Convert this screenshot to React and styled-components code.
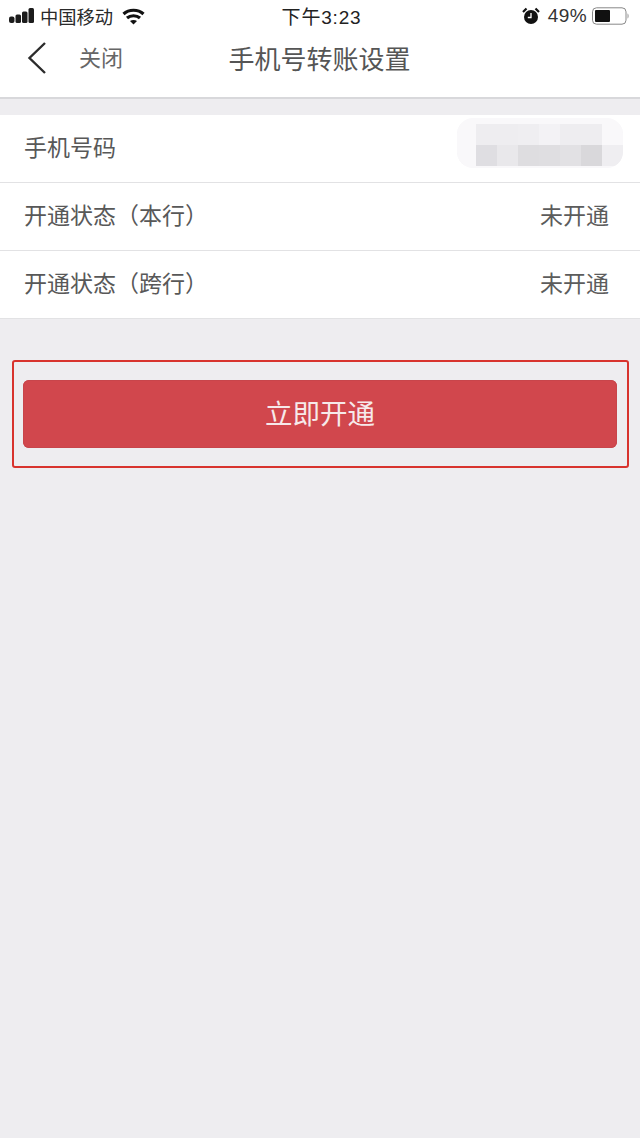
import React from "react";
import styled, { createGlobalStyle } from "styled-components";

const Global = createGlobalStyle`
  html, body { margin: 0; padding: 0; background: #eeedf0; }
  * { box-sizing: border-box; }
  body { font-family: "Liberation Sans", "Noto Sans CJK SC", sans-serif; }
`;
const Page = styled.div`
  width: 640px; height: 1138px; background: #eeedf0; overflow: hidden;
`;
const Header = styled.header`
  background: #fff; height: 99px; border-bottom: 2px solid #d8d8db;
  display: flex; flex-direction: column;
`;
const StatusBar = styled.div`
  height: 32px; display: grid; grid-template-columns: 1fr auto 1fr; align-items: center;
  padding: 0 10px 0 9px; color: #222;
`;
const StatusLeft = styled.div`display: flex; align-items: center;`;
const StatusRight = styled.div`display: flex; align-items: center; justify-content: flex-end;`;
const Carrier = styled.span`font-size: 18.3px; margin-left: 5px; margin-right: 9px; color: #2a2a2a;`;
const Clock = styled.span`font-size: 19px; letter-spacing: .8px; color: #222; margin: 0 0 2px 4px;`;
const Battery = styled.span`font-size: 19px; margin: 0 5px 0 8px; letter-spacing: .4px; color: #333;`;
const Nav = styled.nav`
  flex: 1; display: grid; grid-template-columns: 1fr auto 1fr; align-items: center;
  padding: 0 28px 14px 27px;
`;
const NavLeft = styled.div`display: flex; align-items: center;`;
const Close = styled.span`font-size: 22px; color: #666; margin: 0 0 4px 32px;`;
const Title = styled.h1`margin: 0; font-size: 26px; font-weight: 400; color: #555;`;
const List = styled.section`margin-top: 16px; background: #fff;`;
const Row = styled.div`
  height: 68px; display: flex; align-items: center; justify-content: space-between;
  padding: 0 31px 6px 24px; border-bottom: 1px solid #e2e2e4; position: relative;
  font-size: 23px; color: #585858;
`;
const Value = styled.span`color: #5c5c5c;`;
const Mosaic = styled.div`
  position: absolute; left: 457px; top: 3px; width: 166px; height: 50px;
  border-radius: 16px; background: #f9f8fa; overflow: hidden;
  display: grid; grid-template-columns: 19px repeat(7, 21px); grid-template-rows: 21px 21px;
  align-content: start; padding-top: 6px; filter: blur(.5px);
`;
const Cell = styled.i`background: ${p => p.$c};`;
const Highlight = styled.div`
  margin: 41px 11px 0 12px; height: 108px; border: 2px solid #d8332e; border-radius: 3px;
  padding: 18px 10px 18px 9px;
`;
const Button = styled.button`
  display: block; width: 100%; height: 68px; border: 0; border-radius: 6px;
  background: #d1474d; box-shadow: inset 0 0 0 1px #c8454b;
  color: #f6e9ea; font: inherit; font-size: 27.5px; padding: 0 0 4px;
`;

const Signal = () => (
  <svg width="26" height="18" viewBox="0 0 26 18" fill="#1c1c1c">
    <rect x="0" y="9.500" width="5.500" height="6.500" rx="2" />
    <rect x="6.500" y="7.500" width="5.500" height="8.500" rx="1.500" />
    <rect x="13" y="4.500" width="5.500" height="11.500" rx="1.500" />
    <rect x="19.500" y="1" width="5.500" height="15" rx="1.500" />
  </svg>
);
const Wifi = () => (
  <svg width="23" height="17" viewBox="0 0 23 17" fill="none" stroke="#111" strokeWidth="3.200">
    <path d="M1.500 6C7 1 16 1 21.500 6" />
    <path d="M5 10C8.500 7 14.500 7 18 10" />
    <path d="M11.500 16.500 8 13C10 11.500 13 11.500 15 13Z" fill="#111" stroke="none" />
  </svg>
);
const Alarm = () => (
  <svg width="18" height="18" viewBox="0 0 18 18">
    <circle cx="9" cy="10" r="7" fill="#111" />
    <path d="M9 6v4.500H5.800" fill="none" stroke="#fff" strokeWidth="1.300" />
    <path d="M1 5 4.500 1.500M17 5 13.500 1.500" stroke="#111" strokeWidth="2.200" />
  </svg>
);
const BatteryIcon = () => (
  <svg width="38" height="18" viewBox="0 0 38 18">
    <rect x=".5" y=".8" width="33.500" height="16.400" rx="4" fill="none" stroke="#888" />
    <rect x="3" y="3" width="15" height="12" rx="1" fill="#111" />
    <path d="M35.500 6.500c1.500.5 1.500 4.500 0 5z" fill="#999" />
  </svg>
);
const Back = () => (
  <svg width="20" height="34" viewBox="0 0 20 34" fill="none" stroke="#2c2c2c" strokeWidth="2.400">
    <path d="M18 2 2.500 17 18 32" />
  </svg>
);

const cells = [
  "#f9f8fa","#eeedf0","#eeedf0","#efeef1","#f3f2f5","#eeedf0","#eeedf0","#f9f8fa",
  "#f9f8fa","#dfdee2","#e9e8eb","#dedde0","#dfdee1","#e2e1e4","#d9d8db","#efeef1",
];

export default function App() {
  return (
    <Page>
      <Global />
      <Header>
        <StatusBar>
          <StatusLeft><Signal /><Carrier>中国移动</Carrier><Wifi /></StatusLeft>
          <Clock>下午3:23</Clock>
          <StatusRight><Alarm /><Battery>49%</Battery><BatteryIcon /></StatusRight>
        </StatusBar>
        <Nav>
          <NavLeft><Back /><Close>关闭</Close></NavLeft>
          <Title>手机号转账设置</Title>
        </Nav>
      </Header>
      <List>
        <Row>
          <span>手机号码</span>
          <Mosaic>{cells.map((c, i) => <Cell key={i} $c={c} />)}</Mosaic>
        </Row>
        <Row><span>开通状态（本行）</span><Value>未开通</Value></Row>
        <Row><span>开通状态（跨行）</span><Value>未开通</Value></Row>
      </List>
      <Highlight><Button>立即开通</Button></Highlight>
    </Page>
  );
}
